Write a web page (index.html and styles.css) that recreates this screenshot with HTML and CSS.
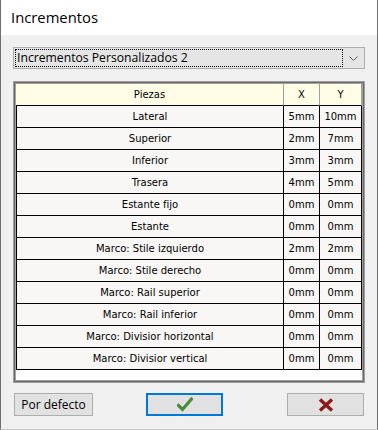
FILE: index.html
```html
<!DOCTYPE html>
<html lang="es">
<head>
    <meta charset="UTF-8">
    <title>Incrementos</title>
    <link rel="stylesheet" href="styles.css">
</head>
<body>
    <div class="window">
        <div class="titlebar">Incrementos</div>
        <div class="content">
            <div class="combo">
                <span class="combo-text">Incrementos Personalizados 2</span>
                <svg class="combo-arrow" width="9" height="5" viewBox="0 0 9 5">
                    <path d="M0.5 0.5 L4.5 4.5 L8.5 0.5" fill="none" stroke="#606060" stroke-width="1"/>
                </svg>
            </div>
            <div class="frame">
                <table class="grid">
                    <colgroup>
                        <col class="col-name">
                        <col class="col-x">
                        <col class="col-y">
                    </colgroup>
                    <thead>
                        <tr>
                            <th>Piezas</th>
                            <th>X</th>
                            <th>Y</th>
                        </tr>
                    </thead>
                    <tbody>
                        <tr><td>Lateral</td><td>5mm</td><td>10mm</td></tr>
                        <tr><td>Superior</td><td>2mm</td><td>7mm</td></tr>
                        <tr><td>Inferior</td><td>3mm</td><td>3mm</td></tr>
                        <tr><td>Trasera</td><td>4mm</td><td>5mm</td></tr>
                        <tr><td>Estante fijo</td><td>0mm</td><td>0mm</td></tr>
                        <tr><td>Estante</td><td>0mm</td><td>0mm</td></tr>
                        <tr><td>Marco: Stile izquierdo</td><td>2mm</td><td>2mm</td></tr>
                        <tr><td>Marco: Stile derecho</td><td>0mm</td><td>0mm</td></tr>
                        <tr><td>Marco: Rail superior</td><td>0mm</td><td>0mm</td></tr>
                        <tr><td>Marco: Rail inferior</td><td>0mm</td><td>0mm</td></tr>
                        <tr><td>Marco: Divisior horizontal</td><td>0mm</td><td>0mm</td></tr>
                        <tr><td>Marco: Divisior vertical</td><td>0mm</td><td>0mm</td></tr>
                    </tbody>
                </table>
            </div>
            <div class="buttons">
                <button class="btn btn-default">Por defecto</button>
                <button class="btn btn-ok">
                    <svg width="16" height="15" viewBox="0 0 16 15">
                        <path d="M1.5 8.5 L5.5 12.5 L14.5 2" fill="none" stroke="#4b8b3b" stroke-width="3.2" stroke-linecap="square"/>
                    </svg>
                </button>
                <button class="btn btn-cancel">
                    <svg width="16" height="14" viewBox="0 0 16 14">
                        <path d="M2 1.5 L14 12.5 M14 1.5 L2 12.5" fill="none" stroke="#8b1a1a" stroke-width="3.4" stroke-linecap="butt"/>
                    </svg>
                </button>
            </div>
        </div>
    </div>
</body>
</html>
```

FILE: styles.css
```css
html, body {
    margin: 0;
    padding: 0;
    background-color: #f0f0f0;
}

.window {
    width: 378px;
    height: 430px;
    box-sizing: border-box;
    border-left: 1px solid #6e6e6e;
    border-right: 1px solid #6e6e6e;
    border-bottom: 1px solid #c8c8c8;
    display: flex;
    flex-direction: column;
    font-family: 'Open Sans', 'Noto Sans', sans-serif;
    color: #000;
}

.titlebar {
    height: 35px;
    background-color: #fff;
    font-size: 14.8px;
    line-height: 35px;
    padding-left: 10px;
}

.content {
    flex: 1;
    padding: 12px 12px 0 12px;
    display: flex;
    flex-direction: column;
}

.combo {
    height: 22px;
    box-sizing: border-box;
    border: 1px solid #adadad;
    background-color: #e5e5e5;
    display: flex;
    align-items: center;
    justify-content: space-between;
    padding: 0 6px 0 2px;
}

.combo-text {
    font-size: 12.2px;
    line-height: 16px;
    width: 326px;
    box-sizing: border-box;
    padding-left: 1px;
    outline: 1px dotted #000;
    outline-offset: 0;
}

.frame {
    margin-top: 12px;
    height: 302px;
    box-sizing: border-box;
    border: 1px solid #a0a0a0;
    padding: 2px;
    background-color: #fff;
    box-shadow: inset 0 0 0 1px #696969, inset 0 0 0 2px #a0a0a0;
}

.grid {
    width: 346px;
    border-collapse: separate;
    border-spacing: 0;
    table-layout: fixed;
    font-family: 'DejaVu Sans', sans-serif;
    font-size: 10px;
}

.col-name { width: 268px; }
.col-x { width: 36px; }
.col-y { width: 42px; }

.grid th, .grid td {
    padding: 0;
    text-align: center;
    font-weight: normal;
    box-sizing: border-box;
}

.grid th {
    height: 22px;
    background-color: #fffde6;
    border-right: 1px solid #a0a0a0;
    border-bottom: 1px solid #000;
}

.grid td {
    height: 22px;
    background-color: #f8f7f5;
    border-right: 1px solid #000;
    border-bottom: 1px solid #000;
}

.grid td:first-child {
    border-left: 1px solid #000;
}

.buttons {
    margin-top: 10px;
    display: flex;
    align-items: center;
}

.btn {
    height: 23px;
    box-sizing: border-box;
    background-color: #e1e1e1;
    border: 1px solid #adadad;
    padding: 0;
    display: flex;
    align-items: center;
    justify-content: center;
    font-family: 'Open Sans', 'Noto Sans', sans-serif;
    font-size: 12px;
    color: #000;
}

.btn-default {
    width: 79px;
    margin-left: 1px;
}

.btn-ok {
    width: 77px;
    margin-left: 53px;
    border: 2px solid #0078d7;
}

.btn-cancel {
    width: 77px;
    margin-left: 64px;
}
```
